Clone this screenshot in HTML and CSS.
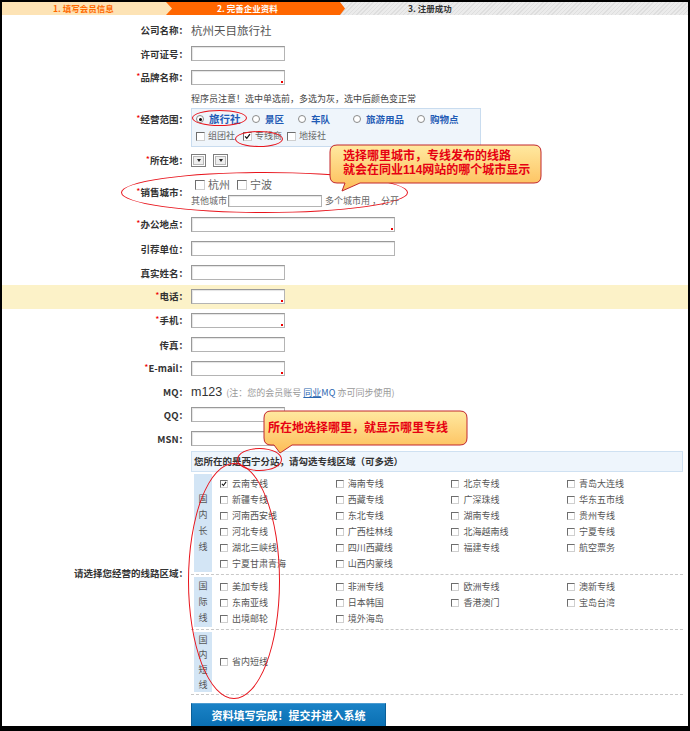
FILE: index.html
```html
<!DOCTYPE html>
<html lang="zh-CN">
<head>
<meta charset="utf-8">
<title>完善企业资料</title>
<link rel="stylesheet" href="styles.css">
</head>
<body>
<div class="frame">
  <div class="steps">
    <div class="step s1">1. 填写会员信息</div>
    <div class="step s2">2. 完善企业资料</div>
    <div class="step s3">3. 注册成功</div>
  </div>

  <div class="form">
    <div class="row h24"><div class="lbl">公司名称：</div><div class="val company">杭州天目旅行社</div></div>
    <div class="row h24"><div class="lbl">许可证号：</div><div class="val"><input class="ipt" type="text"></div></div>
    <div class="row h24"><div class="lbl"><i>*</i>品牌名称：</div><div class="val"><input class="ipt r" type="text"></div></div>
    <div class="row note-row"><div></div><div class="val note">程序员注意！选中单选前，多选为灰，选中后颜色变正常</div></div>
    <div class="row scope-row">
      <div class="lbl top"><i>*</i>经营范围：</div>
      <div class="val">
        <div class="scope">
          <div class="line">
            <span class="opt w56"><span class="rd on"></span><b class="blue big">旅行社</b></span>
            <span class="opt w46"><span class="rd"></span><b class="blue">景区</b></span>
            <span class="opt w55"><span class="rd"></span><b class="blue">车队</b></span>
            <span class="opt w64"><span class="rd"></span><b class="blue">旅游用品</b></span>
            <span class="opt"><span class="rd"></span><b class="blue">购物点</b></span>
          </div>
          <div class="line">
            <span class="opt w47 g4"><span class="cb"></span><span class="g">组团社</span></span>
            <span class="opt w44 g4"><span class="cb"><svg viewBox="0 0 8 8"><path d="M1.2 3.8 L3.2 6 L6.8 1.2" fill="none" stroke="#111" stroke-width="1.4"/></svg></span><span class="g">专线商</span></span>
            <span class="opt g4"><span class="cb"></span><span class="g">地接社</span></span>
          </div>
        </div>
      </div>
    </div>
    <div class="row h24"><div class="lbl"><i>*</i>所在地：</div><div class="val sels"><span class="sel"><span class="btn"></span></span><span class="sel"><span class="btn"></span></span></div></div>
    <div class="row city-row">
      <div class="lbl"><i>*</i>销售城市：</div>
      <div class="val city">
        <div class="cline1"><span class="cb big"></span><span class="cname">杭州</span><span class="cb big"></span><span class="cname">宁波</span></div>
        <div class="cline2"><span class="g">其他城市</span><input class="ipt small" type="text"><span class="g">多个城市用 ，分开</span></div>
      </div>
    </div>
    <div class="row h24"><div class="lbl"><i>*</i>办公地点：</div><div class="val"><input class="ipt w r" type="text"></div></div>
    <div class="row h24"><div class="lbl">引荐单位：</div><div class="val"><input class="ipt w" type="text"></div></div>
    <div class="row h24"><div class="lbl">真实姓名：</div><div class="val"><input class="ipt" type="text"></div></div>
    <div class="row h24 hl"><div class="lbl"><i>*</i>电话：</div><div class="val"><input class="ipt r" type="text"></div></div>
    <div class="row h24"><div class="lbl"><i>*</i>手机：</div><div class="val"><input class="ipt r" type="text"></div></div>
    <div class="row h24"><div class="lbl">传真：</div><div class="val"><input class="ipt" type="text"></div></div>
    <div class="row h24"><div class="lbl"><i>*</i>E-mail：</div><div class="val"><input class="ipt r" type="text"></div></div>
    <div class="row h22"><div class="lbl">MQ：</div><div class="val mq"><span class="mqid">m123</span><span class="mqnote">(注：您的会员账号 <span class="mqlink"><u>同业</u>MQ</span> 亦可同步使用)</span></div></div>
    <div class="row h24"><div class="lbl">QQ：</div><div class="val"><input class="ipt" type="text"></div></div>
    <div class="row h24"><div class="lbl">MSN：</div><div class="val"><input class="ipt" type="text"></div></div>

    <div class="row routes-row">
      <div class="lbl">请选择您经营的线路区域：</div>
      <div class="val routes">
        <div class="rhead">您所在的是西宁分站，请勾选专线区域（可多选）</div>
        <div class="sect">
          <div class="vcell">国<br>内<br>长<br>线</div>
          <div class="rgrid">
            <span class="ri"><span class="cb"><svg viewBox="0 0 8 8"><path d="M1.2 3.8 L3.2 6 L6.8 1.2" fill="none" stroke="#111" stroke-width="1.4"/></svg></span>云南专线</span>
            <span class="ri"><span class="cb"></span>海南专线</span>
            <span class="ri"><span class="cb"></span>北京专线</span>
            <span class="ri"><span class="cb"></span>青岛大连线</span>
            <span class="ri"><span class="cb"></span>新疆专线</span>
            <span class="ri"><span class="cb"></span>西藏专线</span>
            <span class="ri"><span class="cb"></span>广深珠线</span>
            <span class="ri"><span class="cb"></span>华东五市线</span>
            <span class="ri"><span class="cb"></span>河南西安线</span>
            <span class="ri"><span class="cb"></span>东北专线</span>
            <span class="ri"><span class="cb"></span>湖南专线</span>
            <span class="ri"><span class="cb"></span>贵州专线</span>
            <span class="ri"><span class="cb"></span>河北专线</span>
            <span class="ri"><span class="cb"></span>广西桂林线</span>
            <span class="ri"><span class="cb"></span>北海越南线</span>
            <span class="ri"><span class="cb"></span>宁夏专线</span>
            <span class="ri"><span class="cb"></span>湖北三峡线</span>
            <span class="ri"><span class="cb"></span>四川西藏线</span>
            <span class="ri"><span class="cb"></span>福建专线</span>
            <span class="ri"><span class="cb"></span>航空票务</span>
            <span class="ri"><span class="cb"></span>宁夏甘肃青海</span>
            <span class="ri"><span class="cb"></span>山西内蒙线</span>
          </div>
        </div>
        <div class="sect">
          <div class="vcell">国<br>际<br>线</div>
          <div class="rgrid">
            <span class="ri"><span class="cb"></span>美加专线</span>
            <span class="ri"><span class="cb"></span>非洲专线</span>
            <span class="ri"><span class="cb"></span>欧洲专线</span>
            <span class="ri"><span class="cb"></span>澳新专线</span>
            <span class="ri"><span class="cb"></span>东南亚线</span>
            <span class="ri"><span class="cb"></span>日本韩国</span>
            <span class="ri"><span class="cb"></span>香港澳门</span>
            <span class="ri"><span class="cb"></span>宝岛台湾</span>
            <span class="ri"><span class="cb"></span>出境邮轮</span>
            <span class="ri"><span class="cb"></span>境外海岛</span>
          </div>
        </div>
        <div class="sect sect3">
          <div class="vcell tight">国<br>内<br>短<br>线</div>
          <div class="rgrid mid">
            <span class="ri"><span class="cb"></span>省内短线</span>
          </div>
        </div>
      </div>
    </div>

    <div class="row btn-row"><div></div><div class="val"><button class="submit" type="button">资料填写完成！提交并进入系统</button></div></div>
  </div>

  <div class="oval o1"></div>
  <div class="oval o2"></div>
  <div class="oval o3"></div>
  <div class="oval o4"></div>
  <div class="oval o5"></div>

  <div class="callout c1">
    <svg viewBox="0 0 216 52" width="216" height="52">
      <defs><linearGradient id="cg1" x1="0" y1="0" x2="0" y2="1"><stop offset="0" stop-color="#ffe9a0"/><stop offset="1" stop-color="#fdbd58"/></linearGradient></defs>
      <path d="M9 2 H206 Q213 2 213 9 V33 Q213 40 206 40 H32 L14 48 L17 40 H9 Q2 40 2 33 V9 Q2 2 9 2 Z" fill="url(#cg1)" stroke="#c2272d" stroke-width="1"/>
    </svg>
    <div class="ctext">选择哪里城市，专线发布的线路<br>就会在同业114网站的哪个城市显示</div>
  </div>
  <div class="callout c2">
    <svg viewBox="0 0 208 48" width="208" height="48">
      <defs><linearGradient id="cg2" x1="0" y1="0" x2="0" y2="1"><stop offset="0" stop-color="#ffe9a0"/><stop offset="1" stop-color="#fdbd58"/></linearGradient></defs>
      <path d="M9 2 H198 Q205 2 205 9 V29 Q205 36 198 36 H30 L18 44 L12 36 H9 Q2 36 2 29 V9 Q2 2 9 2 Z" fill="url(#cg2)" stroke="#c2272d" stroke-width="1"/>
    </svg>
    <div class="ctext">所在地选择哪里，就显示哪里专线</div>
  </div>
</div>
</body>
</html>
```

FILE: styles.css
```css
* { box-sizing: border-box; }
html, body { margin: 0; padding: 0; background: #fff; }
body { font-family: "Liberation Sans", "Noto Sans CJK SC", sans-serif; }

.frame {
  position: relative;
  width: 690px;
  height: 731px;
  border: 2px solid #000;
  border-bottom-width: 5px;
  overflow: hidden;
  background: #fff;
}

/* step bar */
.steps { display: flex; height: 13px; }
.step {
  height: 13px;
  font-size: 8.5px;
  font-weight: bold;
  line-height: 13px;
  white-space: nowrap;
  font-family: "Noto Sans CJK SC", sans-serif;
}
.s1 {
  width: 170px;
  background: #fde3b5;
  color: #ff6a00;
  padding-left: 51px;
  z-index: 3;
  clip-path: polygon(0 0, calc(100% - 6px) 0, 100% 50%, calc(100% - 6px) 100%, 0 100%);
}
.s2 {
  width: 179px;
  margin-left: -6px;
  background: #ff6600;
  color: #fff;
  padding-left: 51px;
  z-index: 2;
  clip-path: polygon(0 0, calc(100% - 5px) 0, 100% 50%, calc(100% - 5px) 100%, 0 100%);
}
.s3 {
  flex: 1;
  margin-left: -6px;
  background: repeating-linear-gradient(135deg, #dedede 0 1px, #ebebeb 1px 3px);
  color: #333;
  padding-left: 69px;
  z-index: 1;
}

/* form rows */
.form { margin-top: 2.5px; }
.row {
  display: grid;
  grid-template-columns: 186px 1fr;
  column-gap: 3px;
  align-items: center;
}
.h24 { height: 24px; }
.h22 { height: 22px; }
.hl { background: #fcf2c8; }

.lbl {
  font-family: "Noto Sans CJK SC", sans-serif;
  font-size: 9.5px;
  font-weight: bold;
  color: #333;
  text-align: right;
  line-height: 12px;
  white-space: nowrap;
}
.lbl i { color: #e00; font-style: normal; font-weight: normal; font-size: 9px; position: relative; top: -1px; }
.lbl.top { align-self: start; margin-top: 5.5px; }

.val { display: flex; align-items: center; }
.company { font-family: "Noto Sans CJK SC", sans-serif; font-size: 11.5px; color: #555; line-height: 14px; }

.ipt {
  display: block;
  width: 94px;
  height: 15px;
  margin: 0;
  padding: 0;
  border: 1px solid #b4b4b4;
  border-top-color: #999;
  border-left-color: #999;
  background: #fff;
  box-shadow: inset 1px 1px 1px #e4e4e4;
  outline: none;
}
.ipt.w { width: 204px; }
.ipt.r { background: #fff linear-gradient(#e00, #e00) no-repeat right 1px bottom 1px / 2px 2px; }
.ipt.small { width: 94px; height: 12px; margin: 0 3px 0 1px; }

.note-row { height: 18px; }
.note { font-family: "Noto Sans CJK SC", sans-serif; font-size: 9px; color: #444; line-height: 12px; }

/* scope box */
.scope-row { height: 40.5px; align-items: start; }
.scope {
  width: 290px;
  border: 1px solid #c9dcef;
  background: #eff5fb;
  padding: 2px 0 1px 4px;
}
.scope .line { display: flex; align-items: center; height: 17px; }
.opt { display: flex; align-items: center; gap: 5px; flex: none; }
.opt.g4 { gap: 3px; }
.w56 { width: 56px; } .w46 { width: 46px; } .w55 { width: 55px; } .w64 { width: 64px; }
.w47 { width: 47px; } .w44 { width: 44px; }
.blue { font-family: "Noto Sans CJK SC", sans-serif; color: #1f5bb5; font-weight: bold; font-size: 9.5px; line-height: 12px; }
.blue.big { font-size: 10.5px; }

.rd {
  width: 8px; height: 8px;
  border-radius: 50%;
  border: 1px solid #8a8a8a;
  background: #fff;
  position: relative;
  flex: none;
}
.rd.on::after {
  content: "";
  position: absolute;
  left: 1.5px; top: 1.5px;
  width: 3px; height: 3px;
  border-radius: 50%;
  background: #000;
}

.cb {
  display: inline-block;
  width: 9px; height: 9px;
  border: 1px solid;
  border-color: #6e6e6e #cfcfcf #cfcfcf #6e6e6e;
  background: #fff;
  flex: none;
  position: relative;
}
.cb svg { position: absolute; left: 0; top: 0; width: 100%; height: 100%; display: block; }
.cb.big { width: 10px; height: 10px; }
.g { font-family: "Noto Sans CJK SC", sans-serif; font-size: 9px; color: #666; line-height: 12px; white-space: nowrap; }

/* location selects */
.sels { gap: 7px; }
.sel {
  width: 15px; height: 13px;
  border: 1px solid #7d7d7d;
  background: #fff;
  display: flex;
  align-items: center;
  justify-content: center;
}
.sel .btn {
  width: 11px; height: 9px;
  border: 1px solid #b8b8b8;
  background: #eee;
  position: relative;
}
.sel .btn::after {
  content: "";
  position: absolute;
  left: 2.5px; top: 2.5px;
  border-left: 2.5px solid transparent;
  border-right: 2.5px solid transparent;
  border-top: 3px solid #222;
}

/* sales city */
.city-row { height: 40.5px; }
.city { flex-direction: column; align-items: flex-start; padding-top: 1px; gap: 2px; }
.cline1 { display: flex; align-items: center; height: 15px; padding-left: 4px; }
.cline1 .cname { font-family: "Noto Sans CJK SC", sans-serif; font-size: 11px; color: #666; margin: 0 7px 0 3px; line-height: 13px; }
.cline2 { display: flex; align-items: center; height: 14px; }

/* MQ */
.mq { align-items: baseline; }
.mqid { font-size: 12.5px; color: #333; }
.mqnote { font-family: "Noto Sans CJK SC", sans-serif; font-size: 9px; color: #999; margin-left: 4px; }
.mqlink { color: #2a66b0; }
.mqlink u { text-decoration: underline; }

/* routes */
.routes-row { align-items: center; }
.routes { flex-direction: column; align-items: stretch; margin-right: 5px; }
.rhead {
  height: 21px;
  border: 1px solid #cfe1f2;
  background: #eef5fc;
  font-family: "Noto Sans CJK SC", sans-serif;
  font-size: 9.5px;
  font-weight: bold;
  color: #333;
  line-height: 19px;
  padding-left: 2px;
}
.sect {
  display: flex;
  padding: 2px 0 2px 3px;
  border-bottom: 1px dashed #c9c9c9;
}
.vcell {
  width: 18px;
  flex: none;
  background: #d3e5f5;
  display: flex;
  align-items: center;
  justify-content: center;
  text-align: center;
  font-family: "Noto Sans CJK SC", sans-serif;
  font-size: 9px;
  color: #555;
  line-height: 16px;
}
.vcell.tight { line-height: 15px; }
.rgrid {
  display: grid;
  grid-template-columns: repeat(4, 115.7px);
  grid-auto-rows: 16px;
  margin-left: 8px;
  padding-top: 2px;
}
.rgrid.mid { align-self: center; padding-top: 0; }
.sect3 { min-height: 65px; }
.ri {
  display: flex;
  align-items: center;
  gap: 4px;
  font-family: "Noto Sans CJK SC", sans-serif;
  font-size: 9px;
  color: #555;
  white-space: nowrap;
}
.ri .cb { width: 8px; height: 8px; }

/* submit */
.btn-row { margin-top: 8px; }
.submit {
  width: 195px;
  height: 25px;
  margin: 0;
  padding: 0;
  border: 1px solid #0a5f98;
  border-top-color: #4b9bd0;
  background: linear-gradient(#1a82c6, #0a6fb2);
  color: #fff;
  font-family: "Noto Sans CJK SC", sans-serif;
  font-size: 11px;
  font-weight: bold;
  line-height: 23px;
  text-align: center;
}

/* red annotation ovals */
.oval {
  position: absolute;
  border: 1px solid #e8141c;
  border-radius: 50%;
  pointer-events: none;
}
.o1 { left: 190px; top: 108px; width: 55px; height: 16px; }
.o2 { left: 233px; top: 129px; width: 48px; height: 16px; }
.o3 { left: 119px; top: 170px; width: 287px; height: 41px; }
.o4 { left: 235px; top: 446px; width: 45px; height: 23px; }
.o5 { left: 186px; top: 461px; width: 92px; height: 236px; }

/* callouts */
.callout { position: absolute; }
.callout svg { position: absolute; left: 0; top: 0; display: block; }
.c1 { left: 326px; top: 141px; width: 216px; height: 52px; }
.c2 { left: 260px; top: 407px; width: 208px; height: 48px; }
.ctext {
  position: absolute;
  font-family: "Liberation Sans", "Noto Sans CJK SC", sans-serif;
  font-size: 12px;
  font-weight: bold;
  color: #e60012;
  line-height: 14px;
  white-space: nowrap;
}
.c1 .ctext { left: 15px; top: 6px; }
.c2 .ctext { left: 6px; top: 12px; }
```
